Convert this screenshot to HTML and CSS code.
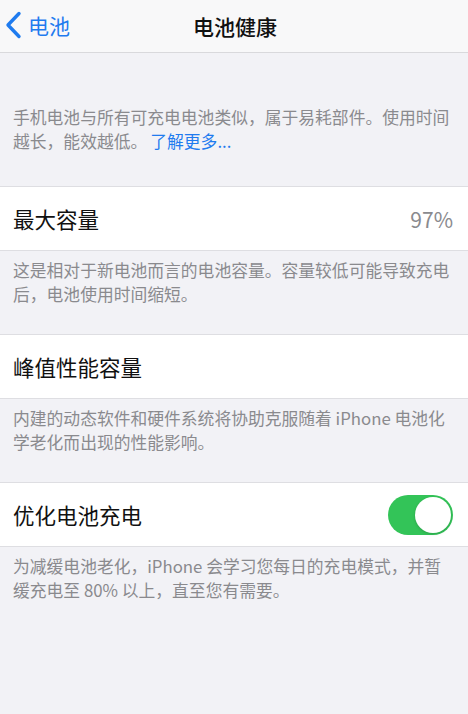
FILE: index.html
```html
<!DOCTYPE html>
<html lang="zh-CN">
<head>
    <meta charset="UTF-8">
    <meta name="viewport" content="width=device-width, initial-scale=1.0">
    <title>电池健康</title>
    <link rel="stylesheet" href="styles.css">
</head>
<body>

    <!-- Navigation Bar -->
    <header class="nav-bar">
        <a class="back-link" href="#">
            <svg class="back-icon" width="18" height="28" viewBox="0 0 18 28">
                <path d="M15 2.5 L4 14 L15 25.5" fill="none" stroke="#1f7bef" stroke-width="3.4" stroke-linecap="round" stroke-linejoin="round"/>
            </svg>
            <span>电池</span>
        </a>
        <h1 class="nav-title">电池健康</h1>
    </header>

    <p class="note note-intro">手机电池与所有可充电电池类似，属于易耗部件。使用时间越长，能效越低。<a class="more-link" href="#">了解更多...</a></p>

    <!-- Maximum Capacity -->
    <div class="row">
        <span class="row-label">最大容量</span>
        <span class="row-value">97%</span>
    </div>
    <p class="note">这是相对于新电池而言的电池容量。容量较低可能导致充电后，电池使用时间缩短。</p>

    <!-- Peak Performance -->
    <div class="row">
        <span class="row-label">峰值性能容量</span>
    </div>
    <p class="note">内建的动态软件和硬件系统将协助克服随着 iPhone 电池化学老化而出现的性能影响。</p>

    <!-- Optimized Charging -->
    <div class="row">
        <span class="row-label">优化电池充电</span>
        <label class="switch">
            <input type="checkbox" checked>
            <span class="slider"></span>
        </label>
    </div>
    <p class="note">为减缓电池老化，iPhone 会学习您每日的充电模式，并暂缓充电至 80% 以上，直至您有需要。</p>

</body>
</html>
```

FILE: styles.css
```css
/* Global Styles */
* {
    margin: 0;
    padding: 0;
    box-sizing: border-box;
}

body {
    font-family: "Noto Sans CJK SC", "Noto Sans", sans-serif;
    background-color: #f2f2f6;
    color: #111;
    min-height: 714px;
}

/* Navigation Bar */
.nav-bar {
    position: relative;
    height: 53px;
    background-color: #f8f8f9;
    border-bottom: 1px solid #d9d9dc;
    display: flex;
    align-items: center;
    justify-content: center;
}

.back-link {
    position: absolute;
    left: 4px;
    top: 11px;
    display: flex;
    align-items: center;
    gap: 6px;
    color: #1f7bef;
    text-decoration: none;
    font-size: 21px;
    line-height: 28px;
}

.back-icon {
    display: block;
}

.nav-title {
    font-size: 21px;
    font-weight: 500;
    line-height: 28px;
    color: #111;
    margin-left: 2px;
}

/* Footnotes under each group */
.note {
    padding: 7px 13px 28px;
    font-size: 16.8px;
    line-height: 24px;
    color: #8a8a8e;
}

.note-intro {
    padding-top: 52px;
    padding-bottom: 33px;
}

.more-link {
    color: #1f7bef;
    text-decoration: none;
    margin-left: 3px;
}

/* Setting Rows */
.row {
    height: 65px;
    background-color: #fff;
    border-top: 1px solid #dedee2;
    border-bottom: 1px solid #dedee2;
    display: flex;
    align-items: center;
    justify-content: space-between;
    padding: 0 15px 0 13px;
}

.row-label {
    font-size: 21.5px;
    color: #111;
}

.row-value {
    font-size: 21px;
    color: #8a8a8e;
}

/* Toggle Switch */
.switch {
    position: relative;
    display: inline-block;
    width: 65px;
    height: 40px;
}

.switch input {
    display: none;
}

.slider {
    position: absolute;
    inset: 0;
    border-radius: 20px;
    background-color: #e5e5ea;
}

.slider::after {
    content: "";
    position: absolute;
    top: 2px;
    left: 2px;
    width: 36px;
    height: 36px;
    border-radius: 50%;
    background-color: #fff;
    box-shadow: 0 1px 3px rgba(0, 0, 0, 0.18);
}

.switch input:checked + .slider {
    background-color: #33c458;
}

.switch input:checked + .slider::after {
    left: 27px;
}
```
